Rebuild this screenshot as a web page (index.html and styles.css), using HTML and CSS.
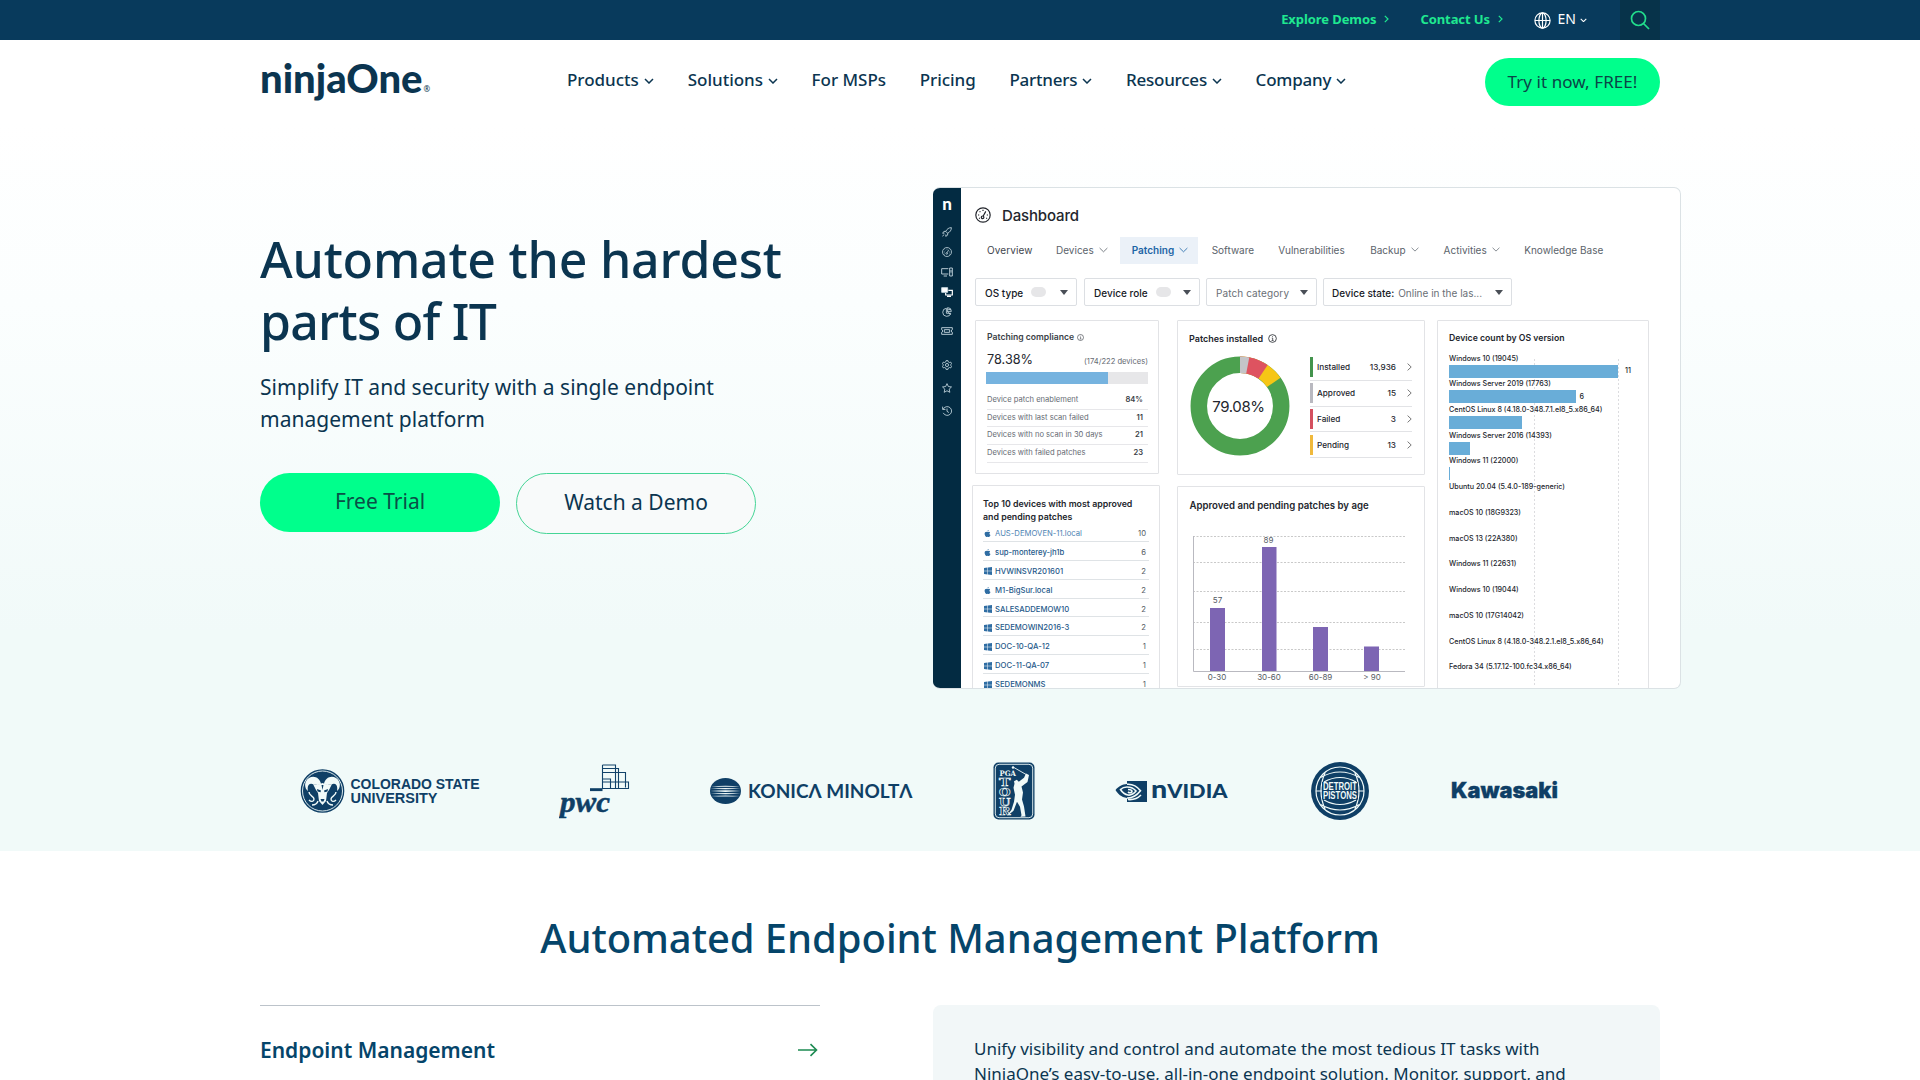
FILE: index.html
```html
<!DOCTYPE html>
<html lang="en">
<head>
<meta charset="utf-8">
<title>NinjaOne</title>
<link rel="stylesheet" href="styles.css">
</head>
<body>
<svg class="defs" width="0" height="0" aria-hidden="true">
  <symbol id="down" viewBox="0 0 10 6"><path d="M1 1l4 4 4-4" fill="none" stroke="currentColor" stroke-width="1.5"/></symbol>
  <symbol id="thin-down" viewBox="0 0 10 6"><path d="M.7 .8l4.3 4.2L9.300 .8" fill="none" stroke="currentColor" stroke-width=".9"/></symbol>
  <symbol id="right" viewBox="0 0 5 8"><path d="M.8 .8L4 4 .8 7.200" fill="none" stroke="currentColor" stroke-width="1.200"/></symbol>
  <symbol id="thin-right" viewBox="0 0 5 8"><path d="M.6 .6L4.200 4 .6 7.400" fill="none" stroke="currentColor" stroke-width=".8"/></symbol>
  <symbol id="info" viewBox="0 0 10 10"><circle cx="5" cy="5" r="4.300" fill="none" stroke="currentColor" stroke-width=".9"/><path d="M4.200 4.500h1v2.600M4 7.200h2.200M5 2.500v.9" fill="none" stroke="currentColor" stroke-width=".8"/></symbol>
  <symbol id="win" viewBox="0 0 8 8"><path d="M0 1.100l3.500-.5v3.100H0zM4 .5L8 0v3.700H4zM0 4.200h3.500v3.200L0 6.900zM4 4.200h4V8l-4-.6z" fill="currentColor"/></symbol>
  <symbol id="apple" viewBox="0 0 8 8"><path d="M5.400.1c0 .9-.6 1.600-1.500 1.700C3.800 1 4.500.3 5.400.1zM4 2.200c.5 0 .9-.3 1.600-.3.600 0 1.100.3 1.500.8-1.300.8-1.100 2.600.3 3.100C7 6.900 6.400 7.900 5.700 7.900c-.6 0-.8-.3-1.500-.3s-.9.3-1.500.3C1.700 7.900.7 6 .7 4.400c0-1.600.9-2.500 1.900-2.500.600 0 1 .3 1.400.3z" fill="currentColor"/></symbol>
  <symbol id="gauge" viewBox="0 0 16 16"><g fill="none" stroke="currentColor" stroke-width="1.200"><circle cx="8" cy="8" r="7.200"/><circle cx="7.600" cy="10.300" r="1.300"/><path d="M8.200 9l2.600-4.600M3 8h1.200M4.600 4.400l.8.800M8 2.800V4M11.800 8H13M4 11.500l.9-.5M11.200 11l.9.600"/></g></symbol>
</svg>

<header>
  <div class="topbar">
    <div class="wrap topbar-row">
      <a class="top-link">Explore Demos</a><svg class="tchev" width="5" height="8"><use href="#right"/></svg>
      <a class="top-link contact">Contact Us</a><svg class="tchev" width="5" height="8"><use href="#right"/></svg>
      <div class="lang">
        <svg width="17" height="17" viewBox="0 0 17 17" fill="none" stroke="currentColor" stroke-width="1.200"><circle cx="8.500" cy="8.500" r="7.600"/><ellipse cx="8.500" cy="8.500" rx="3.600" ry="7.600"/><path d="M1 8.500h15M8.500 1v15"/></svg>
        <span class="lang-code">EN</span>
        <svg width="7" height="4.500"><use href="#down"/></svg>
      </div>
      <div class="search"><svg width="20" height="20" viewBox="0 0 20 20" fill="none" stroke="currentColor" stroke-width="1.700"><circle cx="8.500" cy="8.500" r="7"/><path d="M13.500 13.500L19 19"/></svg></div>
    </div>
  </div>
  <div class="wrap mainbar">
    <div class="brand"><span class="brand-name">ninjaOne</span><span class="reg">®</span></div>
    <nav class="nav">
      <a><span>Products</span><svg width="10" height="6"><use href="#down"/></svg></a>
      <a><span>Solutions</span><svg width="10" height="6"><use href="#down"/></svg></a>
      <a><span>For MSPs</span></a>
      <a><span>Pricing</span></a>
      <a class="snug"><span>Partners</span><svg width="10" height="6"><use href="#down"/></svg></a>
      <a class="snug"><span>Resources</span><svg width="10" height="6"><use href="#down"/></svg></a>
      <a class="snug"><span>Company</span><svg width="10" height="6"><use href="#down"/></svg></a>
    </nav>
    <a class="try"><span>Try it now, FREE!</span></a>
  </div>
</header>

<main>
<section class="hero">
  <div class="wrap hero-grid">
    <div class="pitch">
      <h1>Automate the hardest<br><span class="h1-second">parts of IT</span></h1>
      <p>Simplify IT and security with a single endpoint<br>management platform</p>
      <div class="cta">
        <a class="btn solid">Free Trial</a>
        <a class="btn line">Watch a Demo</a>
      </div>
    </div>

    <div class="app">
      <aside class="side">
        <b class="side-logo">n</b>
        <svg width="10" height="10" viewBox="0 0 16 16"><path d="M15 1c-4 0-7 2-9 6l3 3c4-2 6-5 6-9zM6 7H3L1 10l3-.2M9 10v3l-3 2 .2-3M3 12l-2 3M11 5h.1"/></svg>
        <svg width="10" height="10"><use href="#gauge"/></svg>
        <svg class="wide" width="12" height="10" viewBox="0 0 18 14"><path d="M11 10H1V2h10M4 13h5M13 1h4v12h-4zM15 4v4"/></svg>
        <svg class="wide" width="12" height="10" viewBox="0 0 18 15"><path d="M1 1h9v7H1z" fill="#fff"/><path d="M11 5h6v7H7V9M9 14h6" stroke="#fff" stroke-width="1.800"/></svg>
        <svg width="10" height="10" viewBox="0 0 16 16"><path d="M7 2a6.500 6.500 0 1 0 7 8H7zM9 1v7l5 4M9 1a6 6 0 0 1 6 6H9M10 4h4"/></svg>
        <svg class="wide" width="12" height="8" viewBox="0 0 18 12"><path d="M1 1h16v3c-2 0-2 4 0 4v3H1V8c2 0 2-4 0-4zM5 4h8v4H5z"/></svg>
        <svg class="gear" width="10" height="10" viewBox="0 0 16 16"><path d="M6.500 1h3l.5 2 2 1 2-.6 1.400 2.500L14 7.500v1l1.400 1.600L14 12.600 12 12l-2 1-.5 2h-3L6 13l-2-1-2 .6L.600 10 2 8.500v-1L.600 6 2 3.400 4 4l2-1z"/><circle cx="8" cy="8" r="2.500"/></svg>
        <svg class="star" width="10" height="10" viewBox="0 0 16 16"><path d="M8 1l2.200 4.700 5 .6-3.700 3.500 1 5.100L8 12.400 3.500 14.900l1-5.100L.8 6.300l5-.6z"/></svg>
        <svg class="star" width="10" height="10" viewBox="0 0 16 16"><path d="M2 5a7 7 0 1 1 0 6M1 1v4.500h4.500M8 4v4.500l3 2"/></svg>
      </aside>
      <div class="app-main">
        <div class="app-title"><svg width="16" height="16"><use href="#gauge"/></svg><span>Dashboard</span></div>
        <div class="tabs">
          <a class="dark"><span>Overview</span></a>
          <a class="devices"><span>Devices</span><svg width="9" height="6"><use href="#thin-down"/></svg></a>
          <a class="on"><span>Patching</span><svg width="9" height="6"><use href="#thin-down"/></svg></a>
          <a><span>Software</span></a>
          <a><span>Vulnerabilities</span></a>
          <a class="backup"><span>Backup</span><svg width="8" height="5"><use href="#thin-down"/></svg></a>
          <a class="activities"><span>Activities</span><svg width="8" height="5"><use href="#thin-down"/></svg></a>
          <a><span>Knowledge Base</span></a>
        </div>
        <div class="filters">
          <div class="f f1"><b>OS type</b><i class="pill"></i><i class="caret"></i></div>
          <div class="f f2"><b>Device role</b><i class="pill"></i><i class="caret"></i></div>
          <div class="f f3"><span>Patch category</span><i class="caret"></i></div>
          <div class="f f4"><b>Device state:</b><span>Online in the las...</span><i class="caret"></i></div>
        </div>
        <div class="cards">
          <div class="col">
            <div class="card compliance">
              <h4><span>Patching compliance</span><svg width="7" height="7"><use href="#info"/></svg></h4>
              <div class="score"><strong>78.38%</strong><span>(174/222 devices)</span></div>
              <div class="meter"><div style="width:75%"></div></div>
              <ul class="stats">
                <li><span>Device patch enablement</span><b>84%</b></li>
                <li><span>Devices with last scan failed</span><b>11</b></li>
                <li><span>Devices with no scan in 30 days</span><b>21</b></li>
                <li><span>Devices with failed patches</span><b>23</b></li>
              </ul>
            </div>
            <div class="card top10">
              <h4>Top 10 devices with most approved<br>and pending patches</h4>
              <ul>
                <li class="soft"><svg width="7" height="7"><use href="#apple"/></svg><span>AUS-DEMOVEN-11.local</span><b>10</b></li>
                <li><svg width="7" height="7"><use href="#apple"/></svg><span>sup-monterey-jh1b</span><b>6</b></li>
                <li><svg width="8" height="8"><use href="#win"/></svg><span>HVWINSVR201601</span><b>2</b></li>
                <li><svg width="7" height="7"><use href="#apple"/></svg><span>M1-BigSur.local</span><b>2</b></li>
                <li><svg width="8" height="8"><use href="#win"/></svg><span>SALESADDEMOW10</span><b>2</b></li>
                <li><svg width="8" height="8"><use href="#win"/></svg><span>SEDEMOWIN2016-3</span><b>2</b></li>
                <li><svg width="8" height="8"><use href="#win"/></svg><span>DOC-10-QA-12</span><b>1</b></li>
                <li><svg width="8" height="8"><use href="#win"/></svg><span>DOC-11-QA-07</span><b>1</b></li>
                <li><svg width="8" height="8"><use href="#win"/></svg><span>SEDEMONMS</span><b>1</b></li>
              </ul>
            </div>
          </div>
          <div class="col mid">
            <div class="card installed">
              <h4><span>Patches installed</span><svg width="9" height="9"><use href="#info"/></svg></h4>
              <div class="installed-row">
                <svg class="donut" width="100" height="100" viewBox="-50 -50 100 100">
                  <g fill="none" stroke-width="16.500" transform="rotate(-90)">
                    <circle r="41.200" stroke="#4ca14f"/>
                    <circle r="41.200" stroke="#f6c615" pathLength="360" stroke-dasharray="55 305"/>
                    <circle r="41.200" stroke="#de5360" pathLength="360" stroke-dasharray="34 326"/>
                    <circle r="41.200" stroke="#c4c4c8" pathLength="360" stroke-dasharray="10.800 349.200"/>
                  </g>
                  <text x="-1.500" y="6" text-anchor="middle" class="donut-num">79.08%</text>
                </svg>
                <ul class="legend">
                  <li><i style="background:#43934d"></i><span>Installed</span><b>13,936</b><svg width="5" height="8"><use href="#thin-right"/></svg></li>
                  <li><i style="background:#b9b9c0"></i><span>Approved</span><b>15</b><svg width="5" height="8"><use href="#thin-right"/></svg></li>
                  <li><i style="background:#d4505f"></i><span>Failed</span><b>3</b><svg width="5" height="8"><use href="#thin-right"/></svg></li>
                  <li><i style="background:#f0b93c"></i><span>Pending</span><b>13</b><svg width="5" height="8"><use href="#thin-right"/></svg></li>
                </ul>
              </div>
            </div>
            <div class="card age">
              <h4>Approved and pending patches by age</h4>
              <svg width="216" height="154" viewBox="0 0 216 154">
                <g stroke="#c9c9c9" stroke-dasharray="2 1.500"><path d="M1 8.500h212M1 34.500h212M1 63.500h212M1 94.500h212M1 121.500h212"/></g>
                <path d="M1.500 8v135.500H213" fill="none" stroke="#b9b9c0"/>
                <g fill="#7d65b3"><path d="M18 80h15v63H18zM70 19h14.500v124H70zM121 99h15v44h-15zM172 118.500h15V143h-15z"/></g>
                <g class="ax" text-anchor="middle"><text x="25.500" y="75">57</text><text x="76.500" y="15">89</text><text x="25" y="152.300">0-30</text><text x="77" y="152.300">30-60</text><text x="128.500" y="152.300">60-89</text><text x="180" y="152.300">&gt; 90</text></g>
              </svg>
            </div>
          </div>
          <div class="card os">
            <h4>Device count by OS version</h4>
            <ul>
              <li><span>Windows 10 (19045)</span><div><i style="width:169px"></i><em class="gap">11</em></div></li>
              <li><span>Windows Server 2019 (17763)</span><div><i style="width:126.5px"></i><em>6</em></div></li>
              <li><span>CentOS Linux 8 (4.18.0-348.7.1.el8_5.x86_64)</span><div><i style="width:73px"></i></div></li>
              <li><span>Windows Server 2016 (14393)</span><div><i style="width:21px"></i></div></li>
              <li><span>Windows 11 (22000)</span><div><i style="width:1px"></i></div></li>
              <li><span>Ubuntu 20.04 (5.4.0-189-generic)</span></li>
              <li><span>macOS 10 (18G9323)</span></li>
              <li><span>macOS 13 (22A380)</span></li>
              <li><span>Windows 11 (22631)</span></li>
              <li><span>Windows 10 (19044)</span></li>
              <li><span>macOS 10 (17G14042)</span></li>
              <li><span>CentOS Linux 8 (4.18.0-348.2.1.el8_5.x86_64)</span></li>
              <li><span>Fedora 34 (5.17.12-100.fc34.x86_64)</span></li>
            </ul>
          </div>
        </div>
      </div>
    </div>
  </div>

  <div class="wrap logos">
    <svg width="180" height="58" viewBox="0 0 180 58">
      <circle cx="22.500" cy="29" r="21" fill="#0f3f66" stroke="#0f3f66" stroke-width="1.600"/>
      <circle cx="22.500" cy="29" r="20" fill="none" stroke="#f1faf9" stroke-width=".9"/>
      <g fill="#f1faf9">
        <path d="M21 22c-1-6-7-9-12-6-5 3-5 10-1 13-1-5 1-8 4-7 3 0 5 2 9 0zM24 22c1-6 7-9 12-6 5 3 5 10 1 13 1-5-1-8-4-7-3 0-5 2-9 0z"/>
        <path d="M17 23l5.500-2 5.500 2 4-1-3 6-2 3-1 8-3.500 4-3.500-4-1-8-2-3-3-6z"/>
      </g>
      <g fill="none" stroke="#f1faf9" stroke-width="1.400"><path d="M9 30c0 4 5 4 5 7s-3 3-5 1M36 30c0 4-5 4-5 7s3 3 5 1M12 43c3 0 5-1 6-4M33 43c-3 0-5-1-6-4"/></g>
      <g fill="#0f3f66"><path d="M17 27l4 1.500-.5 1.800-3-.8zM28 27l-4 1.500.5 1.800 3-.8zM20.500 37h4l-1 2.500h-2zM21.500 23h2l-1 5z"/></g>
      <g class="collegiate"><text x="50.500" y="26.500" textLength="129" lengthAdjust="spacingAndGlyphs">COLORADO STATE</text><text x="50.500" y="41" textLength="87" lengthAdjust="spacingAndGlyphs">UNIVERSITY</text></g>
    </svg>
    <svg class="l-pwc" width="72" height="58" viewBox="0 0 72 58">
      <text x="1" y="49.500" class="pwc" textLength="50" lengthAdjust="spacingAndGlyphs">pwc</text>
      <path d="M31 26.200h12.500v2.900H31z" fill="#0f3f66"/>
      <g fill="none" stroke="#12426a" stroke-width="1.100"><path d="M43.500 3h13v23M43.500 3v23.500h26V20H43.500M43.500 6.500h16v20M43.500 10.500h23v15M43.500 17h8v9M51.500 17v9"/></g>
    </svg>
    <svg class="l-konica" width="203" height="58" viewBox="0 0 203 58">
      <ellipse cx="15.500" cy="29" rx="15.500" ry="13" fill="#0f3f66"/>
      <g fill="#f1faf9"><path d="M1 24.200q14.500-1 29 0-14.500 1-29 0zM.5 26.600q15-1.400 30 0-15 1.400-30 0zM.3 29.100q15.200-1.600 30.400 0-15.200 1.600-30.400 0zM.5 31.600q15-1.400 30 0-15 1.400-30 0zM1 34q14.500-1 29 0-14.500 1-29 0z"/></g>
      <text x="38" y="35.500" class="konica" textLength="164.500" lengthAdjust="spacingAndGlyphs">KONICΛ MINOLTΛ</text>
    </svg>
    <svg class="l-pga" width="42" height="58" viewBox="0 0 42 58">
      <rect x=".5" y=".5" width="41" height="57" rx="5" fill="#0f3f66"/>
      <rect x="2.300" y="2.300" width="37.400" height="53.400" rx="3.800" fill="none" stroke="#f1faf9" stroke-width=".9"/>
      <text x="6.500" y="14" class="pga" textLength="16.500" lengthAdjust="spacingAndGlyphs">PGA</text>
      <g class="tour"><text x="6" y="24.200" textLength="11.500" lengthAdjust="spacingAndGlyphs">T</text><text x="6" y="33.900" textLength="11.500" lengthAdjust="spacingAndGlyphs">O</text><text x="6" y="43.600" textLength="11.500" lengthAdjust="spacingAndGlyphs">U</text><text x="6" y="53.300" textLength="11.500" lengthAdjust="spacingAndGlyphs">R</text></g>
      <path d="M34 13l-14-8" stroke="#f1faf9" stroke-width=".9"/><circle cx="20" cy="5.500" r="1.200" fill="#f1faf9"/>
      <path d="M33 11.500l3 1.500-1.500 7-6 4.500 1.500 6-1 7 2 7 1.500 10-5 .3 1-1.500-1.500-8.500-3-5-3.500 9-6 5 .5-1.500 3.500-4.500 2.500-8 1-7-1.500-7 1-4-.5-2.500 2.800-1.500 2 2 5.200-4z" fill="#f1faf9"/>
    </svg>
    <svg class="l-nvidia" width="113" height="58" viewBox="0 0 113 58">
      <path d="M12 19h20v21H12v-4c-6-1-9-4-11.500-8C4 24 7 22.500 12 22z" fill="#0f3f66"/>
      <g fill="none" stroke="#f1faf9" stroke-width="1.600"><path d="M12 22.300c6-.5 10 2 13.500 6.500-4 5-8 7.500-13.500 7.200M12 25c4 0 6.500 1 9 4-2.500 3-5 4.500-8 4-4-.5-6-3-7.500-5.500 2-2 4-2.500 6.500-2.500M13 27.500c3 0 4 1.200 4 2s-2 2-4 .5M26 33c-3 3-8 5-13 4.500"/></g>
      <text x="36" y="36" class="nvidia" textLength="76.500" lengthAdjust="spacingAndGlyphs"><tspan class="nv-n">n</tspan>VIDIA</text>
    </svg>
    <svg class="l-pistons" width="58" height="58" viewBox="0 0 58 58">
      <circle cx="29" cy="29" r="29" fill="#0f3f66"/>
      <g fill="none" stroke="#f1faf9" stroke-width="1.200"><circle cx="29" cy="29" r="24"/><path d="M5 29h6M47 29h6M9.500 15.500q19.500-11 39 0M9.500 42.500q19.500 11 39 0M13 20q16-9 32 0M13 38q16 9 32 0M14 11q-8 18 0 36M44 11q8 18 0 36"/></g>
      <path d="M11 20h36v17.500H11z" fill="#0f3f66"/>
      <g class="pistons"><text x="12" y="28.300" textLength="34" lengthAdjust="spacingAndGlyphs">DETROIT</text><text x="12" y="37.300" textLength="34" lengthAdjust="spacingAndGlyphs">PISTONS</text></g>
    </svg>
    <svg class="l-kawasaki" width="110" height="58" viewBox="0 0 110 58"><text x="1" y="36.300" class="kawasaki" textLength="107" lengthAdjust="spacingAndGlyphs">Kawasaki</text></svg>
  </div>
</section>

<section class="platform">
  <h2>Automated Endpoint Management Platform</h2>
  <div class="wrap platform-grid">
    <div class="acc"><span>Endpoint Management</span><svg width="20" height="14" viewBox="0 0 20 14" fill="none" stroke="#1d8a52" stroke-width="1.600"><path d="M0 7h18.500M12.500 1.200L18.500 7l-6 5.800"/></svg></div>
    <div class="blurb">Unify visibility and control and automate the most tedious IT tasks with<br>NinjaOne’s easy-to-use, all-in-one endpoint solution. Monitor, support, and</div>
  </div>
</section>
</main>
</body>
</html>
```
FILE: styles.css
```css
* { box-sizing: border-box; }
html, body { height: 1080px; overflow: hidden; }
body { margin: 0; background: #fff; color: #0b3550; font-family: "Noto Sans", sans-serif; }
ul { list-style: none; margin: 0; padding: 0; }
h1, h2, h4, p { margin: 0; }
svg { display: block; flex: none; }
.defs { position: absolute; }
.wrap { width: 1400px; margin: 0 auto; }

/* header */
.topbar { height: 40px; background: #083a5c; }
.topbar-row { display: flex; align-items: center; justify-content: flex-end; height: 40px; }
.top-link { color: #1fe890; font-size: 13px; font-weight: 700; line-height: 38px; margin-top: -2px; letter-spacing: -.08px; }
.contact { margin-left: 31.500px; }
.tchev { color: #1fe890; margin-left: 7.500px; margin-top: -2px; }
.lang { display: flex; align-items: center; color: #fff; margin-left: 31px; }
.lang-code { font-size: 14px; line-height: 38px; margin: -2px 4px 0 7px; }
.search { width: 40px; height: 40px; margin-left: 33px; background: #07334a; color: #22dc8c; display: flex; align-items: center; justify-content: center; }
.mainbar { display: flex; height: 82px; padding-top: 18px; align-items: flex-start; }
.brand { display: flex; width: 307px; color: #0b3550; }
.brand-name { font: 900 40px/44px Lato, sans-serif; margin-top: -2px; }
.reg { font-size: 8px; line-height: 62px; margin-left: 1px; }
.nav { display: flex; gap: 34px; flex: 1; font-size: 17px; font-weight: 500; line-height: 43px; letter-spacing: -.02px; }
.nav a { display: flex; align-items: center; gap: 5px; }
.nav a:nth-child(n+3) { margin-left: -.4px; }
.nav .snug { letter-spacing: -.22px; }
.nav svg { margin-top: 2px; }
.try { display: flex; width: 175px; height: 48px; align-items: center; justify-content: center; border-radius: 24px; background: #00ff8c; color: #0b4547; font-size: 17px; line-height: 46px; letter-spacing: .08px; padding-bottom: 1px; }

/* hero */
.hero { height: 729px; padding-top: 65px; background: linear-gradient(#fff 0, #fbfefe 25%, #f1faf9 70%, #f1faf9 100%); }
.hero-grid { display: grid; grid-template-columns: 673px 748px; }
.pitch { padding-top: 41px; }
h1 { font-size: 50px; line-height: 62px; font-weight: 500; letter-spacing: -.22px; }
.h1-second { letter-spacing: -.75px; }
.pitch p { margin-top: 19px; font-size: 21px; line-height: 32px; letter-spacing: .03px; }
.cta { display: flex; gap: 16px; margin-top: 38px; align-items: flex-start; }
.btn { width: 240px; border-radius: 31px; display: flex; align-items: center; justify-content: center; font-size: 21px; }
.solid { height: 59px; background: #00ff8c; color: #0b4f47; padding-bottom: 4px; }
.line { height: 61px; background: #f8fafa; border: 1px solid #45d596; padding-bottom: 4px; }

/* dashboard */
.app { display: flex; width: 748px; height: 502px; border: 1px solid #dbe2e5; border-left: 0; border-radius: 7px; background: #fff; overflow: hidden; font-family: Inter, sans-serif; color: #23262d; }
.side { width: 28px; flex: none; background: #032b42; color: #cfe0e8; display: flex; flex-direction: column; align-items: center; gap: 10px; }
.side svg { fill: none; stroke: currentColor; stroke-width: 1.300; }
.side-logo { font: 900 17px/20px Lato, sans-serif; color: #fff; margin: 6px 0 3px; }
.side .gear { margin-top: 15px; }
.side .star { margin-top: 3px; }
.app-main { flex: 1; padding: 17px 0 0 14px; }
.app-title { display: flex; align-items: center; gap: 11px; height: 20px; font-size: 15px; font-weight: 500; letter-spacing: -.15px; }
.tabs { display: flex; margin-top: 12px; height: 27px; color: #5b636b; font-size: 10px; }
.tabs a { display: flex; align-items: center; gap: 5px; padding: 0 12px 2px; }
.tabs .dark { color: #3f464e; letter-spacing: .1px; }
.tabs .devices { margin-left: -.5px; }
.tabs .on { background: #ebf1f8; color: #1d65a6; font-weight: 600; padding-right: 10px; margin-right: 1.500px; }
.backup { margin-left: 1.500px; }
.activities { margin-left: 1px; margin-right: .5px; }
.filters { display: flex; margin-top: 14px; height: 28px; font-size: 10px; color: #6a6f76; }
.f { display: flex; align-items: center; border: 1px solid #dcdfe3; border-radius: 2px; padding: 2px 0 0 9px; margin-right: 7px; }
.f b { font-weight: 500; color: #16191f; }
.f1 { width: 102px; } .f2 { width: 116px; margin-right: 6px; } .f3 { width: 111px; margin-right: 6px; letter-spacing: .1px; } .f4 { width: 189px; gap: 4px; padding-left: 8px; }
.pill { width: 15px; height: 10px; border-radius: 5px; background: #e6e6e8; margin-left: 8px; margin-top: -2px; }
.caret { border: 4px solid transparent; border-top: 5px solid #4a4f57; border-bottom: 0; margin-left: auto; margin-right: 8px; margin-top: -2px; }
.cards { display: flex; margin-top: 14px; }
.card { border: 1px solid #e2e3e6; border-radius: 1px; background: #fff; }
h4 { font-size: 9px; font-weight: 600; line-height: 13px; }
.compliance { width: 184px; height: 154px; padding: 10px 10px 0; }
.compliance h4, .installed h4 { display: flex; align-items: center; }
.compliance h4 { color: #3b3f47; gap: 3px; padding-left: 1px; font-size: 8.650px; }
.score { display: flex; justify-content: space-between; align-items: baseline; line-height: 20px; margin: 6px 0 2px; padding-left: 1px; font-size: 7.600px; color: #666b73; height: 20px; }
.score strong { font-size: 12.700px; font-weight: 400; color: #23262d; }
.meter { height: 12px; background: #e7e7e9; }
.meter div { height: 12px; background: #76b3df; }
.stats { margin: 8px 0 0 1px; }
.stats li { display: flex; justify-content: space-between; height: 17.700px; line-height: 15px; font-size: 7.600px; color: #666b73; border-bottom: 1px solid #e7e7ea; padding-right: 5px; }
.stats b { font-weight: 600; color: #3b3f47; }
.top10 { width: 188px; height: 220px; margin: 11px 0 0 -3px; padding: 11px 10px 0 10px; }
.top10 h4 { font-size: 8.800px; }
.top10 li { display: flex; align-items: center; height: 18.900px; font-size: 7.700px; color: #25598a; border-bottom: 1px solid #dfe3e6; padding: 3px 3px 0 1px; }
.top10 li span { flex: 1; margin-left: 4px; font-weight: 500; }
.top10 li svg { color: #2f6da3; }
.top10 li svg[width="8"] { margin-left: -.5px; }
.top10 li svg[width="8"] + span { margin-left: 3.500px; }
.top10 .soft span { font-weight: 400; color: #4d83b3; }
.top10 b { font-weight: 400; color: #555b63; }
.mid { margin-left: 18px; }
.col { width: 184px; flex: none; }
.mid.col { width: 248px; }
.installed { width: 248px; height: 155px; padding: 11px 12px 0 11px; }
.installed h4 { gap: 5px; }
.installed-row { display: flex; margin-top: 10px; }
.donut { margin: 1px 0 0 .5px; }
.donut-num { font: 15px Inter, sans-serif; fill: #23262d; letter-spacing: -.4px; }
.legend { width: 103px; margin-left: 20px; }
.legend li { display: flex; align-items: center; height: 25.800px; font-size: 8.200px; border-bottom: 1px solid #e2e3e6; font-weight: 500; }
.legend i { width: 3.500px; height: 20px; }
.legend span { flex: 1; margin-left: 4px; }
.legend b { font-weight: 500; margin-right: 11px; }
.legend svg { color: #555; }
.age { width: 248px; height: 201px; margin-top: 11px; padding: 12px 0 0 14px; }
.age h4 { font-size: 9.650px; line-height: 14px; margin-left: -2.500px; }
.age svg { margin-top: 15px; }
.ax { font: 8px Inter, sans-serif; fill: #555b63; }
.os { width: 212px; height: 380px; margin-left: 12px; padding: 11px 0 0 11px; }
.os h4 { font-size: 8.700px; }
.os ul { margin-top: 7.500px; background: repeating-linear-gradient(#dcdcdf 0 2px, transparent 2px 4px) 85px 6px / 1px 100% no-repeat, repeating-linear-gradient(#dcdcdf 0 2px, transparent 2px 4px) 169px 6px / 1px 100% no-repeat; }
.os li { height: 25.740px; font-size: 7.150px; line-height: 12px; font-weight: 500; }
.os li span { display: block; width: max-content; }
.os li div { display: flex; align-items: center; height: 13px; }
.os i { height: 13px; background: #69add8; }
.os em { font-style: normal; margin-left: 4px; }
.os .gap { margin-left: 7px; }

/* customer logos */
.logos { display: flex; align-items: center; margin-top: 73px; padding-left: 40px; }
.l-pwc { margin-left: 79px; }
.l-konica { margin-left: 79px; }
.l-pga { margin-left: 80px; }
.l-nvidia { margin-left: 80px; }
.l-pistons { margin-left: 82.500px; }
.l-kawasaki { margin-left: 81px; }
.collegiate { font: bold 14.500px "Liberation Sans", sans-serif; fill: #0f3f66; }
.pwc { font: italic bold 30px "Liberation Serif", serif; fill: #0f3f66; stroke: #0f3f66; stroke-width: .5px; }
.konica { font: bold 19.500px Lato, sans-serif; fill: #0f3f66; }
.pga { font: bold 7.500px "DejaVu Serif", serif; fill: #f1faf9; }
.tour { font: bold 10.500px "DejaVu Serif", serif; fill: #0f3f66; stroke: #f1faf9; stroke-width: .6px; }
.nvidia { font: 900 19px Lato, sans-serif; fill: #0f3f66; }
.nv-n { font-size: 25px; }
.pistons { font: bold 10.500px "Liberation Sans", sans-serif; fill: #f1faf9; }
.kawasaki { font: 900 21.500px Inter, sans-serif; fill: #0f3f66; stroke: #0f3f66; stroke-width: .3px; }

/* platform */
.platform { padding-top: 62px; }
h2 { text-align: center; color: #05456a; font-size: 40px; line-height: 50px; font-weight: 500; letter-spacing: -.07px; }
.platform-grid { display: grid; grid-template-columns: 560px 727px; justify-content: space-between; margin-top: 42px; }
.acc { border-top: 1.500px solid #bcc3ca; display: flex; align-items: center; justify-content: space-between; height: 75px; padding: 13px 2px 0 0; color: #05456a; font-size: 21px; font-weight: 600; }
.blurb { background: #f2f7f8; border-radius: 8px 8px 0 0; height: 75px; padding: 31px 41px 0; font-size: 17px; line-height: 25px; letter-spacing: -.01px; white-space: nowrap; }
```
